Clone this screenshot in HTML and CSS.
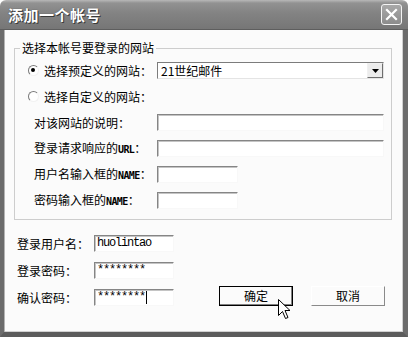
FILE: index.html
```html
<!DOCTYPE html>
<html lang="zh-CN">
<head>
    <meta charset="UTF-8">
    <meta name="viewport" content="width=device-width, initial-scale=1.0">
    <title>添加一个帐号</title>
    <link rel="stylesheet" href="styles.css">
</head>
<body>
    <div class="window">
        <div class="titlebar">
            <span class="title">添加一个帐号</span>
            <span class="close-button">
                <svg width="13" height="13" viewBox="0 0 13 13">
                    <path d="M2 2 L11 11 M11 2 L2 11" stroke="#fff" stroke-width="2.2" stroke-linecap="square"/>
                </svg>
            </span>
        </div>

        <div class="client">
            <fieldset class="site-group">
                <legend>选择本帐号要登录的网站</legend>
                <div class="site-grid">
                    <label class="radio-label"><span class="radio checked"></span>选择预定义的网站：</label>
                    <div class="select-box">
                        <span class="select-text">21世纪邮件</span>
                        <span class="select-drop">
                            <svg width="7" height="4" viewBox="0 0 7 4"><path d="M0 0 H7 L3.5 4 Z" fill="#000"/></svg>
                        </span>
                    </div>

                    <label class="radio-label full-row"><span class="radio"></span>选择自定义的网站：</label>

                    <span class="field-label">对该网站的说明：</span>
                    <span class="text-input"></span>

                    <span class="field-label">登录请求响应的<span class="latin">URL</span>：</span>
                    <span class="text-input"></span>

                    <span class="field-label">用户名输入框的<span class="latin">NAME</span>：</span>
                    <span class="text-input short"></span>

                    <span class="field-label">密码输入框的<span class="latin">NAME</span>：</span>
                    <span class="text-input short"></span>
                </div>
            </fieldset>

            <div class="account">
                <div class="account-grid">
                    <span class="field-label">登录用户名：</span>
                    <span class="text-input value">huolintao</span>

                    <span class="field-label">登录密码：</span>
                    <span class="text-input value">********</span>

                    <span class="field-label">确认密码：</span>
                    <span class="text-input value">********<span class="caret"></span></span>
                </div>
                <div class="buttons">
                    <button class="dialog-button default">确定</button>
                    <button class="dialog-button">取消</button>
                </div>
            </div>
        </div>

        <!-- mouse pointer over the OK button -->
        <svg class="pointer" width="13" height="21" viewBox="0 0 13 21">
            <path d="M0.5 0.5 L0.5 16.5 L4.5 12.5 L7.5 19.5 L10 18.5 L7 11.5 L12 11.5 Z" fill="#fff" stroke="#000" stroke-width="1"/>
        </svg>
    </div>
</body>
</html>
```

FILE: styles.css
```css
body {
    margin: 0;
    background-color: #ffffff;
    font-family: 'Noto Sans CJK SC', sans-serif;
    font-size: 12px;
    line-height: 16px;
    color: #000;
}

.window {
    position: relative;
    width: 408px;
    height: 337px;
    display: flex;
    flex-direction: column;
    overflow: hidden;
}

/* Title bar */
.titlebar {
    height: 30px;
    flex: none;
    display: flex;
    align-items: center;
    justify-content: space-between;
    padding: 0 6px 0 8px;
    background: linear-gradient(#b8b8b8 0, #929292 3px, #838383 45%, #767676 100%);
    border-bottom: 1px solid #5e5e5e;
    border-radius: 6px 6px 0 0;
    box-sizing: border-box;
}

.title {
    color: #ffffff;
    font-size: 15px;
    font-weight: bold;
    letter-spacing: 0.5px;
    text-shadow: 1px 1px 0 #3a3a3a, 0 0 1px #3a3a3a;
}

.close-button {
    width: 21px;
    height: 21px;
    box-sizing: border-box;
    border: 1px solid #f4f4f4;
    border-radius: 3px;
    background: linear-gradient(#a8a8a8, #8c8c8c);
    display: flex;
    align-items: center;
    justify-content: center;
}

/* Client area */
.client {
    flex: 1;
    background-color: #fbfbfb;
    border-left: 4px solid #6c6c6c;
    border-right: 5px solid #6c6c6c;
    border-bottom: 5px solid #5c5c5c;
    box-shadow: inset 1px 0 #b4b4b4, inset -1px -1px #d0d0d0;
    padding-top: 10px;
}

.site-group {
    margin: 0 11px 0 10px;
    padding: 6px 7px 10px 5px;
    border: 1px solid #cdcdcd;
}

.site-group legend {
    padding: 0 2px;
    line-height: 16px;
}

.site-grid {
    margin-left: 8px;
    display: grid;
    grid-template-columns: 129px 1fr;
    grid-auto-rows: 17px;
    row-gap: 9px;
    align-items: center;
}

.radio-label {
    display: flex;
    align-items: center;
    white-space: nowrap;
}

.full-row {
    grid-column: span 2;
}

.radio {
    width: 11px;
    height: 11px;
    box-sizing: border-box;
    border-radius: 50%;
    border: 1px solid;
    border-color: #7a7a7a #f2f2f2 #f2f2f2 #7a7a7a;
    background-color: #ffffff;
    margin-right: 5px;
    position: relative;
}

.radio.checked::after {
    content: "";
    position: absolute;
    left: 2px;
    top: 2px;
    width: 4px;
    height: 4px;
    border-radius: 50%;
    background-color: #000;
}

.field-label {
    padding-left: 6px;
    white-space: nowrap;
}

/* the bitmap font draws latin letters narrow and heavy */
.latin {
    font-family: 'DejaVu Sans Mono', monospace;
    font-size: 10px;
    font-weight: bold;
    letter-spacing: -0.6px;
}

.select-box {
    height: 17px;
    box-sizing: border-box;
    border: 1px solid;
    border-color: #7c7c7c #e4e4e4 #e4e4e4 #7c7c7c;
    background-color: #ffffff;
    display: flex;
    align-items: center;
    justify-content: space-between;
}

.select-text {
    padding-left: 3px;
}

.select-drop {
    width: 16px;
    height: 15px;
    box-sizing: border-box;
    border: 1px solid;
    border-color: #f0f0f0 #6e6e6e #6e6e6e #f0f0f0;
    background-color: #ececec;
    display: flex;
    align-items: center;
    justify-content: center;
}

.text-input {
    height: 17px;
    box-sizing: border-box;
    border: 1px solid;
    border-color: #858585 #f8f8f8 #f8f8f8 #858585;
    box-shadow: inset 1px 1px #c4c4c4;
    background-color: #ffffff;
    display: block;
}

.text-input.short {
    width: 81px;
}

/* Account section */
.account {
    display: flex;
    align-items: flex-end;
    margin-top: 15px;
    padding-left: 13px;
}

.account-grid {
    display: grid;
    grid-template-columns: 77px 80px;
    grid-auto-rows: 17px;
    row-gap: 10px;
    align-items: center;
}

.account-grid .field-label {
    padding-left: 0;
}

.text-input.value {
    font-family: 'Liberation Mono', monospace;
    font-size: 12px;
    letter-spacing: -1.2px;
    line-height: 15px;
    padding-left: 2px;
    display: flex;
    align-items: center;
}

.caret {
    display: inline-block;
    width: 1px;
    height: 13px;
    background-color: #000;
    margin-left: 1px;
}

.buttons {
    display: flex;
    gap: 18px;
    margin-left: 45px;
}

.dialog-button {
    width: 74px;
    height: 20px;
    padding: 0;
    box-sizing: border-box;
    font-family: 'Noto Sans CJK SC', sans-serif;
    font-size: 12px;
    line-height: 16px;
    color: #000;
    background-color: #fbfbfb;
    border: 1px solid;
    border-color: #ffffff #8a8a8a #8a8a8a #ffffff;
}

.dialog-button.default {
    border: 1px solid #000;
    box-shadow: inset -1px -1px #808080;
}

.pointer {
    position: absolute;
    left: 278px;
    top: 299px;
}
```
